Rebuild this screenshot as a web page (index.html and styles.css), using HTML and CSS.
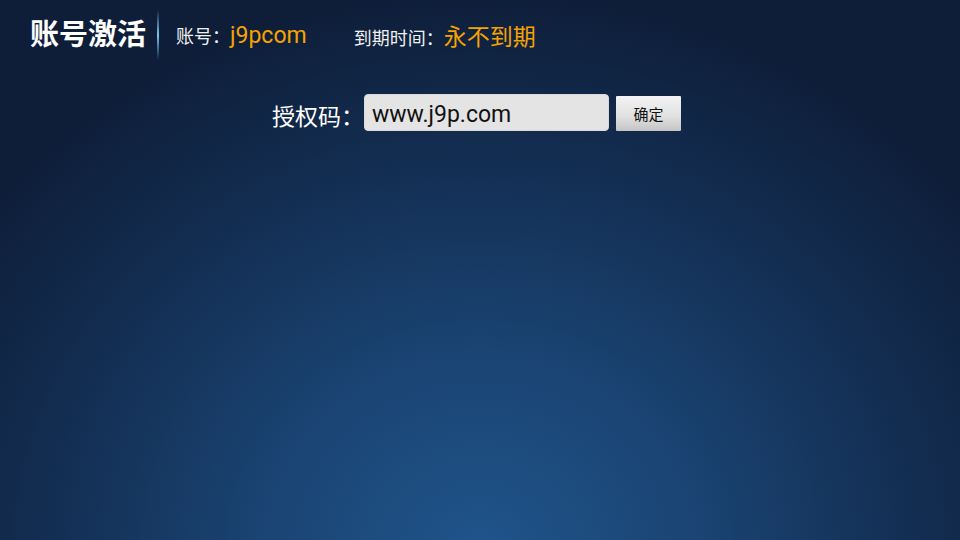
FILE: index.html
```html
<!DOCTYPE html>
<html>
<head>
<meta charset="utf-8">
<link rel="stylesheet" href="styles.css">
</head>
<body>
<div class="page">
  <header class="topbar">
    <h1 class="title">账号激活</h1>
    <div class="divider"></div>
    <div class="info">
      <span class="label">账号：</span>
      <span class="value">j9pcom</span>
    </div>
    <div class="info info-expire">
      <span class="label">到期时间：</span>
      <span class="value">永不到期</span>
    </div>
  </header>
  <main class="form">
    <span class="form-label">授权码：</span>
    <div class="input">www.j9p.com</div>
    <button class="btn">确定</button>
  </main>
</div>
</body>
</html>
```
FILE: styles.css
```css
html, body {
  margin: 0;
  padding: 0;
  width: 960px;
  height: 540px;
  overflow: hidden;
}
body {
  font-family: Roboto, "Noto Sans CJK SC", sans-serif;
}
.page {
  width: 960px;
  height: 540px;
  background: radial-gradient(ellipse 620px 560px at 50% 102%, #20548b 0%, #1a4473 35%, #132e52 70%, #0e1e39 100%);
  background-color: #0e1e39;
}
.topbar {
  display: flex;
  align-items: center;
  height: 70px;
  padding-left: 30px;
  box-sizing: border-box;
}
.title {
  margin: 0;
  font-size: 29px;
  font-weight: 700;
  color: #ffffff;
  line-height: 1;
}
.divider {
  width: 2px;
  height: 50px;
  margin-left: 11px;
  margin-right: 17px;
  background: linear-gradient(to bottom, rgba(90,170,230,0) 0%, #7cc6f0 50%, rgba(90,170,230,0) 100%);
}
.info {
  display: flex;
  align-items: baseline;
}
.info-expire {
  margin-left: 47px;
}
.label {
  font-size: 18px;
  color: #f0f0f0;
}
.value {
  font-size: 23px;
  color: #f5a300;
}
.form {
  display: flex;
  align-items: center;
  margin-top: 23px;
  padding-left: 272px;
}
.form-label {
  font-size: 23px;
  color: #ffffff;
  margin-top: 5px;
}
.input {
  width: 245px;
  height: 37px;
  box-sizing: border-box;
  background: #e4e4e4;
  border-radius: 4px;
  border: 1px solid #dadada;
  font-size: 23px;
  color: #111111;
  padding-left: 7px;
  line-height: 39px;
  font-family: Roboto, sans-serif;
}
.btn {
  margin-left: 7px;
  width: 65px;
  height: 35px;
  margin-top: 2px;
  border: none;
  border-radius: 1px;
  background: linear-gradient(to bottom, #f4f4f4 0%, #e0e0e0 60%, #c4c4c4 100%);
  font-family: "Noto Sans CJK SC", sans-serif;
  font-size: 15px;
  color: #111111;
  padding: 0;
}
```
